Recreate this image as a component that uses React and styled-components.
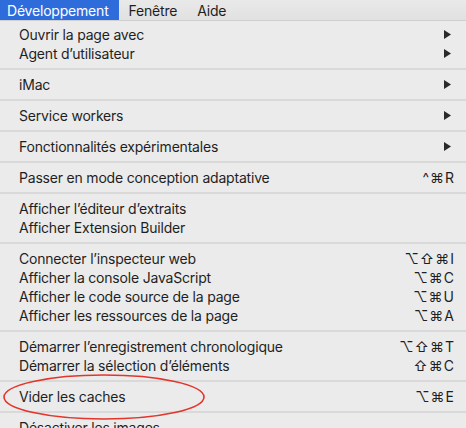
import React from "react";
import styled, { createGlobalStyle } from "styled-components";

const Global = createGlobalStyle`
  html, body { margin: 0; padding: 0; background: #ebebeb; }
  body { font-family: "Inter", "Liberation Sans", sans-serif; }
`;

const Screen = styled.div`
  position: relative;
  width: 466px;
  height: 428px;
  overflow: hidden;
  background: #ebebeb;
  color: #1f1f1f;
  font-size: 14px;
  letter-spacing: -0.2px;
`;

const MenuBar = styled.div`
  display: flex;
  height: 21px;
  background: linear-gradient(#e9e9e9, #e1e1e1);
  border-bottom: 1px solid #cfcfcf;
  box-sizing: border-box;
`;

const BarItem = styled.div`
  display: flex;
  align-items: center;
  padding-left: ${(p) => (p.$first ? "7px" : "10px")};
  padding-right: 10px;
  background: ${(p) => (p.$active ? "#2f6cdb" : "transparent")};
  color: ${(p) => (p.$active ? "#ffffff" : "#1f1f1f")};
  line-height: 21px;
`;

const Menu = styled.div`
  display: flex;
  flex-direction: column;
  padding-top: 4px;
`;

const Row = styled.div`
  display: flex;
  align-items: center;
  justify-content: space-between;
  height: 19px;
  padding: 0 11px 0 19px;
`;

const Label = styled.span`
  white-space: nowrap;
`;

const Shortcut = styled.span`
  font-family: "Inter", "DejaVu Sans", sans-serif;
  letter-spacing: 1px;
  white-space: nowrap;
`;

const Separator = styled.div`
  height: 12px;
  display: flex;
  align-items: center;
  &::after {
    content: "";
    flex: 1;
    height: 2px;
    background: #d9d9d9;
  }
`;

const Arrow = styled.svg`
  width: 7px;
  height: 9px;
  margin-right: 4px;
`;

const Circle = styled.svg`
  position: absolute;
  left: 0;
  top: 370px;
  width: 215px;
  height: 54px;
  pointer-events: none;
`;

const Sub = () => (
  <Arrow viewBox="0 0 7 9">
    <path d="M0 0 L7 4.5 L0 9 Z" fill="#2a2a2a" />
  </Arrow>
);

const groups = [
  [
    ["Ouvrir la page avec", "sub"],
    ["Agent d’utilisateur", "sub"],
  ],
  [["iMac", "sub"]],
  [["Service workers", "sub"]],
  [["Fonctionnalités expérimentales", "sub"]],
  [["Passer en mode conception adaptative", "^⌘R"]],
  [["Afficher l’éditeur d’extraits"], ["Afficher Extension Builder"]],
  [
    ["Connecter l’inspecteur web", "⌥⇧⌘I"],
    ["Afficher la console JavaScript", "⌥⌘C"],
    ["Afficher le code source de la page", "⌥⌘U"],
    ["Afficher les ressources de la page", "⌥⌘A"],
  ],
  [
    ["Démarrer l’enregistrement chronologique", "⌥⇧⌘T"],
    ["Démarrer la sélection d’éléments", "⇧⌘C"],
  ],
  [["Vider les caches", "⌥⌘E"]],
  [["Désactiver les images"]],
];

export default function App() {
  return (
    <>
      <Global />
      <Screen>
        <MenuBar>
          <BarItem $active $first>Développement</BarItem>
          <BarItem>Fenêtre</BarItem>
          <BarItem>Aide</BarItem>
        </MenuBar>
        <Menu>
          {groups.map((g, gi) => (
            <React.Fragment key={gi}>
              {gi > 0 && <Separator />}
              {g.map(([label, extra]) => (
                <Row key={label}>
                  <Label>{label}</Label>
                  {extra === "sub" ? <Sub /> : extra ? <Shortcut>{extra}</Shortcut> : null}
                </Row>
              ))}
            </React.Fragment>
          ))}
        </Menu>
        <Circle viewBox="0 0 215 54">
          <ellipse cx="104" cy="27" rx="100" ry="22" fill="none" stroke="#e2352b" strokeWidth="1.6" />
        </Circle>
      </Screen>
    </>
  );
}
